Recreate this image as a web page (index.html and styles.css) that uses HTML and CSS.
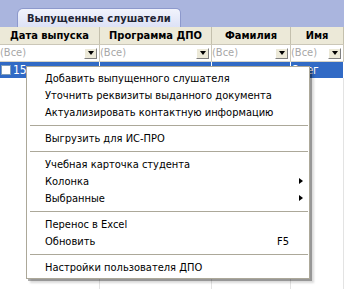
FILE: index.html
```html
<!DOCTYPE html>
<html>
<head>
<meta charset="utf-8">
<link rel="stylesheet" href="styles.css">
</head>
<body>
<div class="app">
  <div class="tabbar">
    <div class="tab">Выпущенные слушатели</div>
  </div>
  <div class="grid">
    <div class="row head">
      <div class="cell">Дата выпуска</div>
      <div class="cell">Программа ДПО</div>
      <div class="cell">Фамилия</div>
      <div class="cell">Имя</div>
    </div>
    <div class="row filter">
      <div class="cell"><span class="all">(Все)</span><span class="btn"><i></i></span></div>
      <div class="cell"><span class="all">(Все)</span><span class="btn"><i></i></span></div>
      <div class="cell"><span class="all">(Все)</span><span class="btn"><i></i></span></div>
      <div class="cell"><span class="all">(Все)</span><span class="btn"><i></i></span></div>
    </div>
    <div class="row sel">
      <div class="cell"><span class="chk"></span>15.</div>
      <div class="cell"></div>
      <div class="cell"></div>
      <div class="cell">Олег</div>
    </div>
    <div class="row empty">
      <div class="cell"></div>
      <div class="cell"></div>
      <div class="cell"></div>
      <div class="cell"></div>
    </div>
  </div>

  <div class="menu">
    <div class="item">Добавить выпущенного слушателя</div>
    <div class="item">Уточнить реквизиты выданного документа</div>
    <div class="item">Актуализировать контактную информацию</div>
    <div class="sep"></div>
    <div class="item">Выгрузить для ИС-ПРО</div>
    <div class="sep"></div>
    <div class="item">Учебная карточка студента</div>
    <div class="item sub">Колонка</div>
    <div class="item sub">Выбранные</div>
    <div class="sep"></div>
    <div class="item">Перенос в Excel</div>
    <div class="item"><span>Обновить</span><span class="key">F5</span></div>
    <div class="sep"></div>
    <div class="item">Настройки пользователя ДПО</div>
  </div>
</div>
</body>
</html>
```

FILE: styles.css
```css
* { box-sizing: border-box; }
html, body { margin: 0; padding: 0; }
body {
  width: 344px;
  height: 289px;
  overflow: hidden;
  font-family: "DejaVu Sans Condensed", "DejaVu Sans", sans-serif;
  font-size: 11px;
  color: #000;
  background: #fff;
}
.app {
  position: relative;
  width: 344px;
  height: 289px;
  display: flex;
  flex-direction: column;
}
.tabbar {
  height: 27px;
  background: #aab5de;
  padding: 8px 0 0 17px;
  display: flex;
  align-items: flex-end;
}
.tab {
  height: 19px;
  width: 164px;
  border: 1px solid #8d99cc;
  border-bottom: none;
  border-radius: 6px 5px 0 0;
  background: linear-gradient(#f1f3fc, #dde2f6);
  font-weight: bold;
  color: #1f2433;
  padding: 2px 0 0 9px;
  line-height: 15px;
  white-space: nowrap;
}
.grid {
  flex: 1;
  display: flex;
  flex-direction: column;
}
.row {
  display: grid;
  grid-template-columns: 100px 112px 79px 53px;
}
.head {
  height: 18px;
  background: #ece9d8;
  border-bottom: 1px solid #cbc7b8;
}
.head .cell {
  font-weight: bold;
  text-align: center;
  line-height: 17px;
  border-right: 1px solid #c4c0ad;
  white-space: nowrap;
  overflow: hidden;
}
.filter {
  height: 17px;
  background: #fff;
  border-bottom: 1px solid #d6d3c6;
}
.filter .cell {
  display: flex;
  align-items: center;
  justify-content: space-between;
  border-right: 1px solid #cbc7b8;
  padding: 0 2px 0 0;
}
.all { color: #a7a7a7; line-height: 16px; }
.btn {
  width: 13px;
  height: 11px;
  background: #ece9d8;
  border: 1px solid;
  border-color: #fff #808080 #808080 #fff;
  display: flex;
  align-items: center;
  justify-content: center;
}
.btn i {
  width: 0; height: 0;
  border-left: 3.5px solid transparent;
  border-right: 3.5px solid transparent;
  border-top: 4px solid #000;
}
.sel {
  height: 16px;
  background: #316ac5;
  color: #fff;
}
.sel .cell {
  display: flex;
  align-items: center;
  border-right: 1px solid #fff;
  white-space: nowrap;
  overflow: hidden;
  font-size: 12px;
}
.chk {
  width: 10px;
  height: 10px;
  background: #fff;
  border: 1px solid #7f9db9;
  margin: 0 2px 0 1px;
}
.empty { flex: 1; }
.empty .cell { border-right: 1px solid #e3e3e3; }

.menu {
  position: absolute;
  left: 26px;
  top: 66px;
  width: 284px;
  background: #fff;
  border: 1px solid #aca899;
  padding: 3px 0 2px;
  box-shadow: 2px 2px 0 rgba(0,0,0,0.3), 4px 4px 2px rgba(0,0,0,0.15);
}
.item {
  height: 17px;
  line-height: 17px;
  padding: 0 20px 0 18px;
  white-space: nowrap;
  position: relative;
  display: flex;
  justify-content: space-between;
}
.sub::after {
  content: "";
  position: absolute;
  right: 6px;
  top: 5px;
  border-top: 3.5px solid transparent;
  border-bottom: 3.5px solid transparent;
  border-left: 4px solid #000;
}
.sep {
  height: 9px;
  display: flex;
  align-items: center;
  padding: 0 1px 0 3px;
}
.sep::before {
  content: "";
  flex: 1;
  height: 1px;
  background: #aca899;
}
```
